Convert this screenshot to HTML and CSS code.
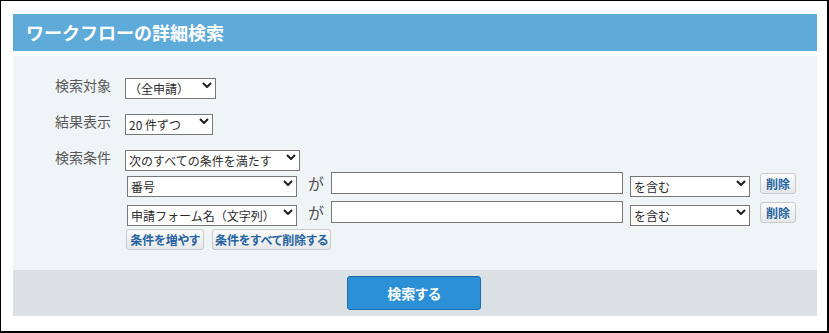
FILE: index.html
```html
<!DOCTYPE html>
<html lang="ja">
<head>
<meta charset="utf-8">
<title>ワークフローの詳細検索</title>
<link rel="stylesheet" href="styles.css">
</head>
<body>
<div class="frame">
  <div class="panel">
    <h1 class="title">ワークフローの詳細検索</h1>
    <div class="form">
      <div class="row">
        <span class="label">検索対象</span>
        <span class="sel w91"><select><option>（全申請）</option></select><svg class="arrow" viewBox="0 0 10 6"><path d="M1 1L5 5L9 1"/></svg></span>
      </div>
      <div class="row">
        <span class="label">結果表示</span>
        <span class="sel w88"><select><option>20 件ずつ</option></select><svg class="arrow" viewBox="0 0 10 6"><path d="M1 1L5 5L9 1"/></svg></span>
      </div>
      <div class="row top">
        <span class="label">検索条件</span>
        <div class="conds">
          <span class="sel w175"><select><option>次のすべての条件を満たす</option></select><svg class="arrow" viewBox="0 0 10 6"><path d="M1 1L5 5L9 1"/></svg></span>
          <div class="cond">
            <span class="sel w170"><select><option>番号</option></select><svg class="arrow" viewBox="0 0 10 6"><path d="M1 1L5 5L9 1"/></svg></span>
            <span class="ga">が</span>
            <input class="text" type="text">
            <span class="sel w120"><select><option>を含む</option></select><svg class="arrow" viewBox="0 0 10 6"><path d="M1 1L5 5L9 1"/></svg></span>
            <button class="btn del">削除</button>
          </div>
          <div class="cond">
            <span class="sel w170"><select><option>申請フォーム名（文字列）</option></select><svg class="arrow" viewBox="0 0 10 6"><path d="M1 1L5 5L9 1"/></svg></span>
            <span class="ga">が</span>
            <input class="text" type="text">
            <span class="sel w120"><select><option>を含む</option></select><svg class="arrow" viewBox="0 0 10 6"><path d="M1 1L5 5L9 1"/></svg></span>
            <button class="btn del">削除</button>
          </div>
          <div class="actions">
            <button class="btn add">条件を増やす</button>
            <button class="btn clear">条件をすべて削除する</button>
          </div>
        </div>
      </div>
    </div>
    <div class="footer">
      <button class="search">検索する</button>
    </div>
  </div>
</div>
</body>
</html>
```
FILE: styles.css
```css
* { box-sizing: border-box; }
html, body { margin: 0; padding: 0; background: #fff; }
body {
  font-family: "Noto Sans CJK JP", "Noto Sans", sans-serif;
  color: #333;
}
.frame {
  width: 829px;
  height: 333px;
  border: 1px solid #000;
  border-right-width: 2px;
  border-bottom-width: 2px;
  padding: 13px 10px 0 12px;
}
.panel { width: 804px; }
.title {
  margin: 0;
  height: 37px;
  line-height: 37px;
  padding-left: 13px;
  background: #5eaad9;
  color: #fff;
  font-size: 18px;
  font-weight: bold;
}
.form {
  margin-top: 5px;
  background: #eff4f7;
  padding: 19px 0 20px 42px;
  display: flex;
  flex-direction: column;
  gap: 15px;
}
.row {
  display: flex;
  align-items: center;
}
.row.top { align-items: flex-start; }
.label {
  width: 70px;
  font-size: 14px;
  line-height: 21px;
  color: #595959;
  font-feature-settings: "palt";
}
.conds {
  display: flex;
  flex-direction: column;
}
.cond {
  display: flex;
  align-items: center;
  height: 22px;
  margin-left: 2px;
  margin-top: 4px;
}
.cond + .cond { margin-top: 7px; }
.sel {
  position: relative;
  display: inline-block;
  height: 21px;
}
.sel select {
  appearance: none;
  -webkit-appearance: none;
  width: 100%;
  height: 21px;
  margin: 0;
  border: 1px solid #777;
  border-radius: 0;
  background: #fff;
  padding: 0 16px 0 3px;
  font-family: inherit;
  font-size: 12px;
  line-height: 19px;
  color: #2b2b2b;
}
.arrow {
  position: absolute;
  right: 4px;
  top: 7px;
  width: 10px;
  height: 6px;
  pointer-events: none;
  fill: none;
  stroke: #1e1e1e;
  stroke-width: 2;
}
.w91 { width: 91px; }
.w88 { width: 88px; }
.w175 { width: 175px; }
.w170 { width: 170px; }
.w120 { width: 120px; }
.ga {
  font-size: 16px;
  color: #555;
  margin: 0 7px 0 11px;
  line-height: 22px;
}
.text {
  width: 292px;
  height: 22px;
  margin: 0 7px 0 0;
  border: 1px solid #777;
  border-radius: 0;
  background: #fff;
  padding: 0 3px;
}
.btn {
  height: 21px;
  padding: 0;
  border: 1px solid #c6cacd;
  border-radius: 3px;
  background: linear-gradient(#fbfbfb, #e7e8e9);
  font-family: inherit;
  font-size: 12px;
  font-weight: bold;
  color: #2563a0;
  text-align: center;
  line-height: 19px;
  font-feature-settings: "palt";
}
.del { width: 36px; margin-left: 10px; }
.actions {
  display: flex;
  gap: 8px;
  margin-top: 6px;
  margin-left: 1px;
}
.add { width: 78px; }
.clear { width: 119px; }
.footer {
  height: 46px;
  background: #dbe0e4;
  display: flex;
  justify-content: center;
  padding-top: 6px;
}
.search {
  width: 134px;
  height: 34px;
  margin-left: -2px;
  border: 1px solid #1a6daa;
  border-radius: 3px;
  background: #2b90d6;
  color: #fff;
  font-family: inherit;
  font-size: 14px;
  font-weight: bold;
  font-feature-settings: "palt";
}
```
